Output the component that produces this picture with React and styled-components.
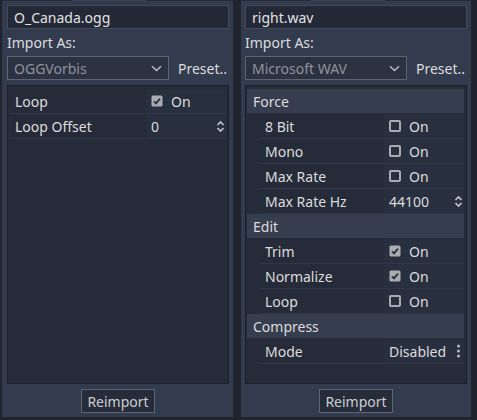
import React from 'react';
import styled, { createGlobalStyle } from 'styled-components';

const GlobalStyle = createGlobalStyle`
  html, body {
    margin: 0;
    padding: 0;
    background: #20242e;
  }
  body {
    font-family: 'Noto Sans', 'Open Sans', sans-serif;
    font-size: 14px;
    color: #dcdcdc;
  }
`;

const Dock = styled.div`
  display: flex;
  gap: 8px;
  width: 477px;
  height: 420px;
  padding: 0 6px 3px 2px;
  box-sizing: border-box;
`;

const Panel = styled.div`
  position: relative;
  width: ${(p) => p.width}px;
  display: flex;
  flex-direction: column;
  background: #333b4f;
  padding: 5px 4px 4px ${(p) => p.padLeft}px;
  box-sizing: border-box;
`;

const TabStrip = styled.div`
  position: absolute;
  top: 0;
  left: 0;
  right: 0;
  height: 1px;
  background: #262b39;

  &::after {
    content: '';
    position: absolute;
    left: 70px;
    width: 74px;
    height: 1px;
    background: #3b4459;
  }
`;

const LineEdit = styled.div`
  height: 24px;
  box-sizing: border-box;
  border: 1px solid #434a5b;
  background: #242938;
  padding: 0 6px;
  display: flex;
  align-items: center;
  color: #e2e2e2;
`;

const Label = styled.div`
  height: 27px;
  display: flex;
  align-items: center;
  box-sizing: border-box;
`;

const OptionRow = styled.div`
  display: flex;
  align-items: center;
  height: 24px;
  gap: 9px;
`;

const OptionButton = styled.div`
  width: ${(p) => p.width}px;
  height: 24px;
  box-sizing: border-box;
  border: 1px solid #5d6472;
  background: #2c3242;
  display: flex;
  align-items: center;
  justify-content: space-between;
  padding: 0 6px 0 6px;
  color: #8e939c;
`;

const PresetText = styled.span`
  color: #dcdcdc;
`;

const Inspector = styled.div`
  flex: 1;
  margin-top: 5px;
  border: 1px solid #1c2029;
  background: #262b39;
  padding: 3px 2px 0 1px;
  display: flex;
  flex-direction: column;
`;

const Category = styled.div`
  height: 25px;
  display: flex;
  align-items: center;
  padding-left: 6px;
  background: #363d4e;
  border-bottom: 1px solid #262b39;
  box-sizing: border-box;
`;

const Row = styled.div`
  height: 25px;
  display: grid;
  grid-template-columns: ${(p) => (p.indent ? 124 : 137)}px 1fr;
  margin-left: ${(p) => (p.indent ? 13 : 0)}px;
  border-bottom: 1px solid #313749;
  box-sizing: border-box;
`;

const RowLabel = styled.div`
  display: flex;
  align-items: center;
  padding-left: ${(p) => (p.indent ? 5 : 6)}px;
  white-space: nowrap;
`;

const RowValue = styled.div`
  display: flex;
  align-items: center;
  justify-content: space-between;
  padding: 0 1px 0 5px;
  background: #283040;
  white-space: nowrap;
`;

const Check = styled.span`
  display: flex;
  align-items: center;
  gap: 8px;
`;

const Footer = styled.div`
  display: flex;
  justify-content: center;
  margin-top: 5px;
`;

const Button = styled.div`
  height: 24px;
  box-sizing: border-box;
  border: 1px solid #5d6472;
  background: #272c3a;
  padding: 0 5px;
  display: flex;
  align-items: center;
  color: #c9ccd1;
`;

const CheckBox = ({ on }) =>
  on ? (
    <svg width="12" height="12" viewBox="0 0 12 12">
      <rect x="0.5" y="0.5" width="11" height="11" rx="1.5" fill="#a9acb1" />
      <path d="M3 6.3 L5 8.3 L9 3.6" stroke="#2a2f3c" strokeWidth="1.8" fill="none" />
    </svg>
  ) : (
    <svg width="12" height="12" viewBox="0 0 12 12">
      <rect x="1" y="1" width="10" height="10" rx="1" fill="none" stroke="#a9acb1" strokeWidth="2" />
    </svg>
  );

const Spinner = () => (
  <svg width="9" height="13" viewBox="0 0 9 13">
    <path d="M1.5 5 L4.5 2 L7.5 5 M1.5 8 L4.5 11 L7.5 8" stroke="#c3c6cc" strokeWidth="1.6" fill="none" />
  </svg>
);

const Arrow = () => (
  <svg width="11" height="7" viewBox="0 0 11 7">
    <path d="M1 1.2 L5.5 5.5 L10 1.2" stroke="#b9bcc2" strokeWidth="1.5" fill="none" />
  </svg>
);

const Kebab = () => (
  <svg width="9" height="14" viewBox="0 0 9 14">
    <circle cx="4.5" cy="2" r="1.5" fill="#b4b7bd" />
    <circle cx="4.5" cy="7" r="1.5" fill="#b4b7bd" />
    <circle cx="4.5" cy="12" r="1.5" fill="#b4b7bd" />
  </svg>
);

const CheckValue = ({ on }) => (
  <Check>
    <CheckBox on={on} />
    <span>On</span>
  </Check>
);

const Prop = ({ label, indent, children }) => (
  <Row indent={indent}>
    <RowLabel indent={indent}>{label}</RowLabel>
    <RowValue>{children}</RowValue>
  </Row>
);

const App = () => (
  <>
    <GlobalStyle />
    <Dock>
      <Panel width={231} padLeft={5}>
        <TabStrip />
        <LineEdit>O_Canada.ogg</LineEdit>
        <Label>Import As:</Label>
        <OptionRow>
          <OptionButton width={162}>
            <span>OGGVorbis</span>
            <Arrow />
          </OptionButton>
          <PresetText>Preset..</PresetText>
        </OptionRow>
        <Inspector>
          <Prop label="Loop">
            <CheckValue on />
          </Prop>
          <Prop label="Loop Offset">
            <span>0</span>
            <Spinner />
          </Prop>
        </Inspector>
        <Footer>
          <Button>Reimport</Button>
        </Footer>
      </Panel>
      <Panel width={230} padLeft={4}>
        <TabStrip />
        <LineEdit>right.wav</LineEdit>
        <Label>Import As:</Label>
        <OptionRow>
          <OptionButton width={162}>
            <span>Microsoft WAV</span>
            <Arrow />
          </OptionButton>
          <PresetText>Preset..</PresetText>
        </OptionRow>
        <Inspector>
          <Category>Force</Category>
          <Prop indent label="8 Bit">
            <CheckValue />
          </Prop>
          <Prop indent label="Mono">
            <CheckValue />
          </Prop>
          <Prop indent label="Max Rate">
            <CheckValue />
          </Prop>
          <Prop indent label="Max Rate Hz">
            <span>44100</span>
            <Spinner />
          </Prop>
          <Category>Edit</Category>
          <Prop indent label="Trim">
            <CheckValue on />
          </Prop>
          <Prop indent label="Normalize">
            <CheckValue on />
          </Prop>
          <Prop indent label="Loop">
            <CheckValue />
          </Prop>
          <Category>Compress</Category>
          <Prop indent label="Mode">
            <span>Disabled</span>
            <Kebab />
          </Prop>
        </Inspector>
        <Footer>
          <Button>Reimport</Button>
        </Footer>
      </Panel>
    </Dock>
  </>
);

export default App;
